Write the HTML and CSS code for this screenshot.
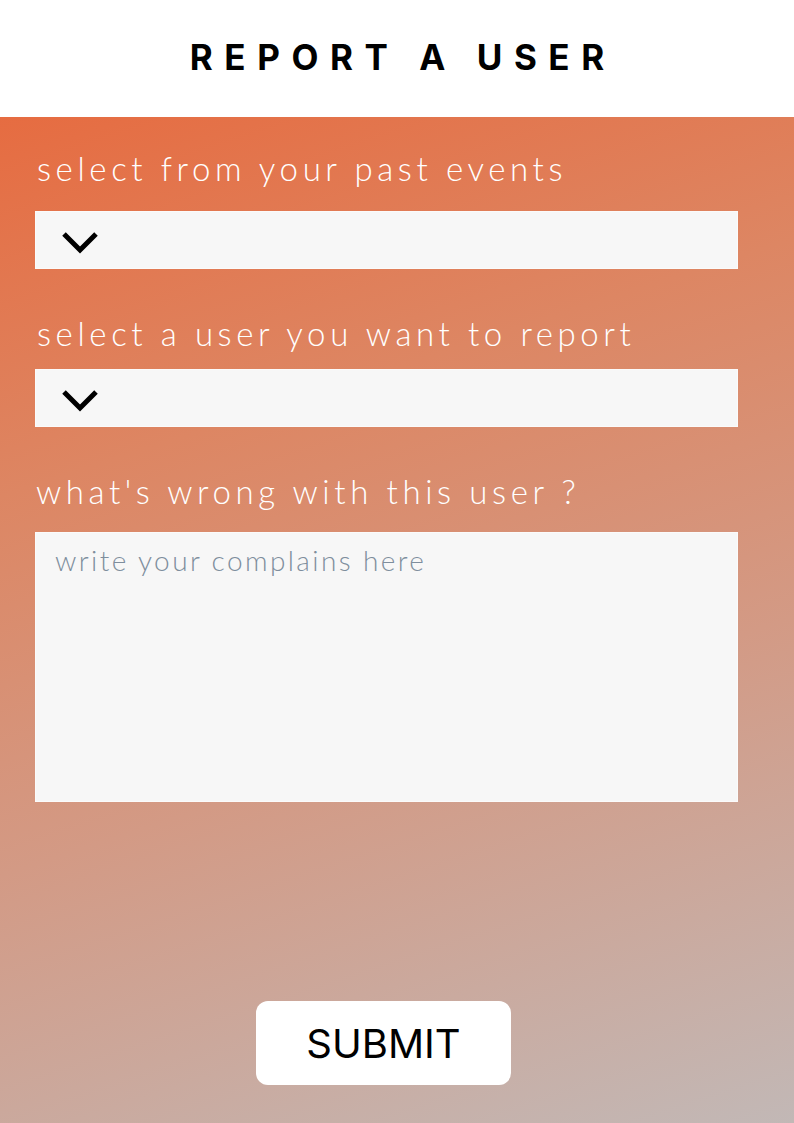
FILE: index.html
```html
<!DOCTYPE html>
<html lang="en">
<head>
<meta charset="utf-8">
<title>Report a user</title>
<link rel="stylesheet" href="styles.css">
</head>
<body>
<header class="topbar">
  <h1 class="title">REPORT A USER</h1>
</header>
<main class="panel">
  <form class="form">
    <label class="label label-first">select from your past events</label>
    <div class="select">
      <svg class="chevron" width="38" height="24" viewBox="0 0 38 24"><polyline points="3,4 19,20 35,4" fill="none" stroke="#000" stroke-width="5"/></svg>
    </div>
    <label class="label">select a user you want to report</label>
    <div class="select">
      <svg class="chevron" width="38" height="24" viewBox="0 0 38 24"><polyline points="3,4 19,20 35,4" fill="none" stroke="#000" stroke-width="5"/></svg>
    </div>
    <label class="label label-third">what's wrong with this user ?</label>
    <textarea class="textarea" placeholder="write your complains here"></textarea>
    <div class="actions">
      <button type="button" class="submit">SUBMIT</button>
    </div>
  </form>
</main>
</body>
</html>
```

FILE: styles.css
```css
* { box-sizing: border-box; }
html, body { margin: 0; padding: 0; }
body {
  width: 794px;
  height: 1123px;
  display: flex;
  flex-direction: column;
  font-family: "Lato", "Open Sans", sans-serif;
}
.topbar {
  height: 117px;
  background: #ffffff;
  display: flex;
  align-items: center;
  justify-content: center;
  flex-shrink: 0;
  padding-bottom: 4px;
}
.title {
  margin: 0;
  padding-left: 0.33em;
  font-family: "Inter", "Liberation Sans", sans-serif;
  font-weight: 700;
  font-size: 35px;
  letter-spacing: 0.33em;
  color: #000;
}
.panel {
  flex: 1;
  background: linear-gradient(162deg, #e66c41 0%, #dd8663 30%, #d39a85 60%, #c2b8b6 100%);
  padding: 0 56px 0 35px;
}
.form {
  display: flex;
  flex-direction: column;
}
.label {
  display: block;
  margin: 45px 0 17px 2px;
  font-family: "Lato", sans-serif;
  font-weight: 300;
  font-size: 33px;
  line-height: 38px;
  letter-spacing: 4.6px;
  color: #ffffff;
}
.label-first { margin-top: 32px; margin-bottom: 24px; }
.label-third { margin-bottom: 22px; margin-left: 1px; }
.select {
  height: 58px;
  width: 703px;
  background: #f7f7f7;
  border: 1px solid rgba(255, 255, 255, 0.45);
  display: flex;
  align-items: center;
  padding-left: 25px;
}
.chevron { display: block; margin-top: 3px; }
.textarea {
  display: block;
  width: 703px;
  height: 270px;
  background: #f7f7f7;
  border: 1px solid rgba(255, 255, 255, 0.45);
  padding: 10px 19px;
  resize: none;
  font-family: "Lato", sans-serif;
  font-weight: 300;
  font-size: 28px;
  letter-spacing: 2.4px;
  color: #333;
  outline: none;
}
.textarea::placeholder { color: #7e8e9d; opacity: 1; }
.actions {
  display: flex;
  justify-content: center;
  padding-top: 199px;
  padding-right: 6px;
}
.submit {
  width: 255px;
  height: 84px;
  border: none;
  border-radius: 12px;
  background: #ffffff;
  font-family: "Inter", sans-serif;
  font-weight: 400;
  font-size: 40px;
  color: #000;
  padding: 0;
  cursor: pointer;
}
```
